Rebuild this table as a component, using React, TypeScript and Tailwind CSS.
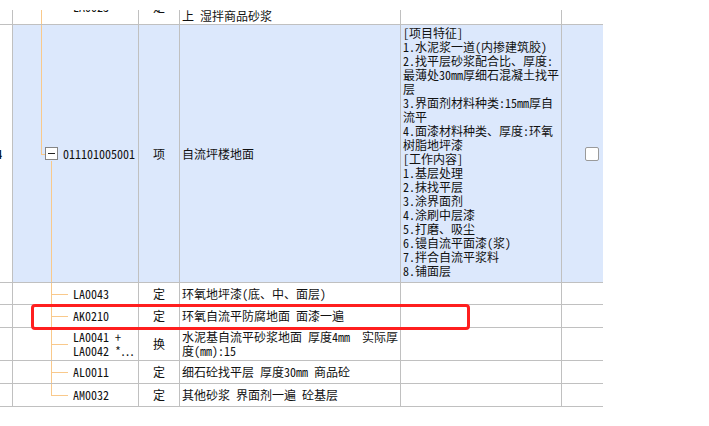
import React from "react";

const GRID =
  "grid grid-cols-[12px_126px_41px_221px_161px_42px] border-b border-[#c0c0c0]";
const CELL = "border-l border-[#c0c0c0]";
const TREE = "absolute bg-[#f9c98b]";

const features = [
  "[项目特征]",
  "1.水泥浆一道(内掺建筑胶)",
  "2.找平层砂浆配合比、厚度:",
  "最薄处30mm厚细石混凝土找平",
  "层",
  "3.界面剂材料种类:15mm厚自",
  "流平",
  "4.面漆材料种类、厚度:环氧",
  "树脂地坪漆",
  "[工作内容]",
  "1.基层处理",
  "2.抹找平层",
  "3.涂界面剂",
  "4.涂刷中层漆",
  "5.打磨、吸尘",
  "6.镘自流平面漆(浆)",
  "7.拌合自流平浆料",
  "8.铺面层",
];

type Child = {
  h: string;
  code: string[];
  unit: string;
  name: string[];
  last?: boolean;
};

const children: Child[] = [
  { h: "h-[22px]", code: ["LA0043"], unit: "定", name: ["环氧地坪漆(底、中、面层)"] },
  { h: "h-[23px]", code: ["AK0210"], unit: "定", name: ["环氧自流平防腐地面 面漆一遍"] },
  {
    h: "h-[33px]",
    code: ["LA0041 +", "LA0042 *\u2026"],
    unit: "换",
    name: ["水泥基自流平砂浆地面 厚度4mm  实际厚", "度(mm):15"],
  },
  { h: "h-[23px]", code: ["AL0011"], unit: "定", name: ["细石砼找平层 厚度30mm 商品砼"] },
  { h: "h-[23px]", code: ["AM0032"], unit: "定", name: ["其他砂浆 界面剂一遍 砼基层"], last: true },
];

function ChildRow({ c }: { c: Child }) {
  return (
    <div className={`${GRID} ${c.h}`}>
      <div />
      <div className={`${CELL} relative flex flex-col justify-center pl-[60px] whitespace-pre overflow-hidden`}>
        <div className={`${TREE} left-[38px] top-0 w-px ${c.last ? "h-1/2" : "bottom-0"}`} />
        <div className={`${TREE} left-[38px] top-1/2 h-px w-[17px]`} />
        {c.code.map((l) => (
          <div key={l}>{l}</div>
        ))}
      </div>
      <div className={`${CELL} flex items-center justify-center`}>{c.unit}</div>
      <div className={`${CELL} flex flex-col justify-center pl-[2px] whitespace-pre`}>
        {c.name.map((l) => (
          <div key={l}>{l}</div>
        ))}
      </div>
      <div className={CELL} />
      <div className={CELL} />
    </div>
  );
}

export default function App() {
  return (
    <div className="relative w-[709px] h-[426px] bg-white text-[12px] leading-[14px] text-[#111] font-['Noto_Sans_Mono_CJK_SC','Noto_Sans_CJK_SC',monospace]">
      <div className="pt-[10px]">
        <div className="w-[603px] h-[416px] overflow-hidden">
          {/* Row 0 (cut off at top) */}
          <div className={`${GRID} h-[15px]`}>
            <div />
            <div className={`${CELL} relative pl-[60px]`}>
              <div className={`${TREE} left-[28px] top-0 bottom-0 w-px`} />
              <div className="mt-[-10px]">LA0023</div>
            </div>
            <div className={`${CELL} flex justify-center`}>
              <div className="mt-[-10px]">定</div>
            </div>
            <div className={`${CELL} pl-[2px] whitespace-pre`}>
              <div className="mt-[-15px]">水泥砂浆找平层 厚度20mm 混凝土或硬基层</div>
              <div>上 湿拌商品砂浆</div>
            </div>
            <div className={CELL} />
            <div className={CELL} />
          </div>

          {/* Row 1 (selected item) */}
          <div className={`${GRID} h-[258px]`}>
            <div className="flex items-center">
              <span className="ml-[-4px] font-bold">4</span>
            </div>
            <div className={`${CELL} relative flex items-center pl-[32px] bg-[#dce8fc]`}>
              <div className={`${TREE} left-[28px] top-0 h-1/2 w-px`} />
              <div className={`${TREE} left-[28px] top-1/2 h-px w-[4px]`} />
              <div className={`${TREE} left-[38px] top-[calc(50%+7px)] bottom-0 w-px`} />
              <div className="w-[13px] h-[13px] border border-[#858585] bg-white flex items-center justify-center">
                <div className="w-[7px] h-px bg-[#222]" />
              </div>
              <span className="ml-[5px]">011101005001</span>
            </div>
            <div className={`${CELL} flex items-center justify-center bg-[#dce8fc]`}>项</div>
            <div className={`${CELL} flex items-center pl-[2px] bg-[#dce8fc]`}>自流坪楼地面</div>
            <div className={`${CELL} pl-[2px] pt-[1px] whitespace-pre bg-[#dce8fc]`}>
              {features.map((l) => (
                <div key={l}>{l}</div>
              ))}
            </div>
            <div className={`${CELL} flex items-center justify-end pr-[4px] bg-[#dce8fc]`}>
              <div className="w-[14px] h-[14px] rounded-[2px] border border-[#9a9a9a] bg-white" />
            </div>
          </div>

          {children.map((c) => (
            <ChildRow key={c.code[0]} c={c} />
          ))}
        </div>
      </div>

      {/* red annotation box */}
      <div className="absolute left-[31px] top-[304px] w-[439px] h-[26px] border-[3px] border-[#ff1f1f] rounded-[4px]" />
    </div>
  );
}
